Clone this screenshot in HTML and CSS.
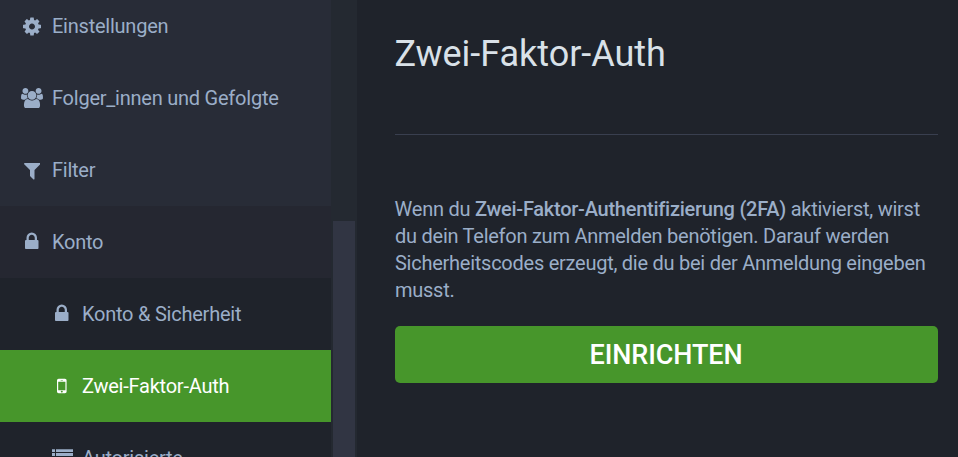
FILE: index.html
```html
<!DOCTYPE html>
<html lang="de">
<head>
<meta charset="utf-8">
<title>Zwei-Faktor-Auth</title>
<link rel="stylesheet" href="styles.css">
</head>
<body>
<div class="layout">
  <nav class="sidebar">
    <a class="item"><span class="icon"><svg width="18" height="21" viewBox="0 -1536 1536 1792"><path transform="scale(1,-1)" d="M1024 640q0 106 -75 181t-181 75t-181 -75t-75 -181t75 -181t181 -75t181 75t75 181zM1536 749v-222q0 -12 -8 -23t-20 -13l-185 -28q-19 -54 -39 -91q35 -50 107 -138q10 -12 10 -25t-9 -23q-27 -37 -99 -108t-94 -71q-12 0 -26 9l-138 108q-44 -23 -91 -38q-16 -136 -29 -186q-7 -28 -36 -28h-222q-14 0 -24.5 8.5t-11.5 21.5l-28 184q-49 16 -90 37l-141 -107q-10 -9 -25 -9q-14 0 -25 11q-126 114 -165 168q-7 10 -7 23q0 12 8 23q15 21 51 66.5t54 70.5q-27 50 -41 99l-183 27q-13 2 -21 12.5t-8 23.5v222q0 12 8 23t19 13l186 28q14 46 39 92q-40 57 -107 138q-10 12 -10 24q0 10 9 23q26 36 98.5 107.5t94.5 71.5q13 0 26 -10l138 -107q44 23 91 38q16 136 29 186q7 28 36 28h222q14 0 24.5 -8.5t11.5 -21.5l28 -184q49 -16 90 -37l142 107q9 9 24 9q13 0 25 -10q129 -119 165 -170q7 -8 7 -22q0 -12 -8 -23q-15 -21 -51 -66.5t-54 -70.5q26 -50 41 -98l183 -28q13 -2 21 -12.5t8 -23.5z"/></svg></span>Einstellungen</a>
    <a class="item"><span class="icon"><svg width="22" height="20.5" viewBox="0 -1536 1920 1792"><path transform="scale(1,-1)" d="M593 640q-162 -5 -265 -128h-134q-82 0 -138 40.5t-56 118.5q0 353 124 353q6 0 43.5 -21t97.5 -42.5t119 -21.5q67 0 133 23q-5 -37 -5 -66q0 -139 81 -256zM1664 3q0 -120 -73 -189.5t-194 -69.5h-874q-121 0 -194 69.5t-73 189.5q0 53 3.5 103.5t14 109t26.5 108.5t43 97.5t62 81t85.5 53.5t111.5 20q10 0 43 -21.5t73 -48t107 -48t135 -21.5t135 21.5t107 48t73 48t43 21.5q61 0 111.5 -20t85.5 -53.5t62 -81t43 -97.5t26.5 -108.5t14 -109t3.5 -103.5zM640 1280q0 -106 -75 -181t-181 -75t-181 75t-75 181t75 181t181 75t181 -75t75 -181zM1344 896q0 -159 -112.5 -271.5t-271.5 -112.5t-271.5 112.5t-112.5 271.5t112.5 271.5t271.5 112.5t271.5 -112.5t112.5 -271.5zM1920 671q0 -78 -56 -118.5t-138 -40.5h-134q-103 123 -265 128q81 117 81 256q0 29 -5 66q66 -23 133 -23q59 0 119 21.5t97.5 42.5t43.5 21q124 0 124 -353zM1792 1280q0 -106 -75 -181t-181 -75t-181 75t-75 181t75 181t181 75t181 -75t75 -181z"/></svg></span>Folger_innen und Gefolgte</a>
    <a class="item"><span class="icon"><svg width="16.5" height="21" viewBox="0 -1536 1408 1792"><path transform="scale(1,-1)" d="M1403 1241q17 -41 -14 -70l-493 -493v-742q0 -42 -39 -59q-13 -5 -25 -5q-27 0 -45 19l-256 256q-19 19 -19 45v486l-493 493q-31 29 -14 70q17 39 59 39h1280q42 0 59 -39z"/></svg></span>Filter</a>
    <a class="item open"><span class="icon lock"><svg width="13.5" height="21" viewBox="0 -1536 1152 1792"><path transform="scale(1,-1)" d="M320 768h512v192q0 106 -75 181t-181 75t-181 -75t-75 -181v-192zM1152 672v-576q0 -40 -28 -68t-68 -28h-960q-40 0 -68 28t-28 68v576q0 40 28 68t68 28h32v192q0 184 132 316t316 132t316 -132t132 -316v-192h32q40 0 68 -28t28 -68z"/></svg></span>Konto</a>
    <div class="submenu">
      <a class="item"><span class="icon lock"><svg width="13.5" height="21" viewBox="0 -1536 1152 1792"><path transform="scale(1,-1)" d="M320 768h512v192q0 106 -75 181t-181 75t-181 -75t-75 -181v-192zM1152 672v-576q0 -40 -28 -68t-68 -28h-960q-40 0 -68 28t-28 68v576q0 40 28 68t68 28h32v192q0 184 132 316t316 132t316 -132t132 -316v-192h32q40 0 68 -28t28 -68z"/></svg></span>Konto &amp; Sicherheit</a>
      <a class="item selected"><span class="icon"><svg width="9.6" height="20" preserveAspectRatio="none" viewBox="0 -1536 768 1792"><path transform="scale(1,-1)" d="M464 128q0 33 -23.5 56.5t-56.5 23.5t-56.5 -23.5t-23.5 -56.5t23.5 -56.5t56.5 -23.5t56.5 23.5t23.5 56.5zM672 288v704q0 13 -9.5 22.5t-22.5 9.5h-512q-13 0 -22.5 -9.5t-9.5 -22.5v-704q0 -13 9.5 -22.5t22.5 -9.5h512q13 0 22.5 9.5t9.5 22.5zM480 1136q0 16 -16 16h-160q-16 0 -16 -16t16 -16h160q16 0 16 16zM768 1152v-1024q0 -52 -38 -90t-90 -38h-512q-52 0 -90 38t-38 90v1024q0 52 38 90t90 38h512q52 0 90 -38t38 -90z"/></svg></span>Zwei-Faktor-Auth</a>
      <a class="item"><span class="icon"><svg width="21" height="20" viewBox="0 0 21 20"><path d="M0 1.2h3v2.8H0zM4 1.2H21v2.8H4zM0 5h3v3H0zM4 5H21v3H4zM0 9h3v3H0zM4 9H21v3H4zM0 13h3v3H0zM4 13H21v3H4z"/></svg></span>Autorisierte</a>
    </div>
  </nav>
  <div class="scrollbar"><div class="thumb"></div></div>
  <main class="content">
    <h1>Zwei-Faktor-Auth</h1>
    <p>Wenn du <strong>Zwei-Faktor-Authentifizierung (2FA)</strong> aktivierst, wirst du dein Telefon zum Anmelden benötigen. Darauf werden Sicherheitscodes erzeugt, die du bei der Anmeldung eingeben musst.</p>
    <a class="button">Einrichten</a>
  </main>
</div>
</body>
</html>
```
FILE: styles.css
```css
* { box-sizing: border-box; }
body {
  margin: 0;
  background: #1f232b;
  color: #9baec8;
  font: 400 20px/27px Roboto, sans-serif;
  letter-spacing: -0.235px;
}
.layout { display: flex; height: 457px; overflow: hidden; }
.sidebar {
  flex: none;
  width: 331px;
  margin-top: -10px;
  background: #282c37;
}
.item {
  display: flex;
  align-items: center;
  height: 72px;
  padding-left: 19.4px;
  white-space: nowrap;
}
.icon {
  display: flex;
  justify-content: center;
  flex: none;
  width: 25.7px;
  margin-right: 6.9px;
}
.icon svg { display: block; fill: currentColor; }
.lock { padding-bottom: 1px; }
.open { background: #252731; }
.submenu { background: #1f232b; }
.submenu .item { padding-left: 49.4px; }
.submenu .selected { background: #47962b; color: #fff; }
.scrollbar {
  flex: none;
  width: 26px;
  padding: 221px 2px 0;
  background: #242931;
}
.thumb { height: 100%; background: #313543; }
.content { flex: 1; padding: 27px 20px 0 38px; }
h1 {
  margin: 0 0 61px;
  padding-bottom: 52px;
  border-bottom: 1px solid #393f4f;
  color: #d9e1e8;
  font-size: 36px;
  font-weight: 400;
  line-height: 55px;
  letter-spacing: -0.04px;
  text-indent: -0.5px;
}
p { margin: 0 0 22px; letter-spacing: -0.255px; text-indent: -0.4px; }
strong { font-weight: 500; }
.button {
  display: flex;
  align-items: center;
  justify-content: center;
  height: 57px;
  padding: 2px 1px 0 0;
  border-radius: 5px;
  background: #47962b;
  color: #fff;
  font-size: 27px;
  font-weight: 500;
  letter-spacing: -0.1px;
  text-transform: uppercase;
}
```
